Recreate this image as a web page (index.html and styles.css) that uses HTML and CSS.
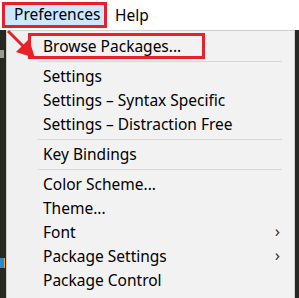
FILE: index.html
```html
<!DOCTYPE html>
<html lang="en">
<head>
  <meta charset="UTF-8">
  <title>Preferences menu</title>
  <link rel="stylesheet" href="styles.css">
</head>
<body>

  <div class="menubar">
    <span class="top-item top-active">Preferences</span>
    <span class="top-item">Help</span>
  </div>

  <div class="stage">
    <div class="editor-edge">
      <div class="bit bit-a"></div>
      <div class="bit bit-1"></div>
    </div>

    <div class="menu">
      <div class="item item-marked">Browse Packages...</div>
      <div class="sep"></div>
      <div class="item">Settings</div>
      <div class="item">Settings – Syntax Specific</div>
      <div class="item">Settings – Distraction Free</div>
      <div class="sep"></div>
      <div class="item">Key Bindings</div>
      <div class="sep"></div>
      <div class="item">Color Scheme...</div>
      <div class="item">Theme...</div>
      <div class="item has-sub">Font</div>
      <div class="item has-sub">Package Settings</div>
      <div class="item">Package Control</div>
    </div>
  </div>

  <!-- red annotation arrow -->
  <svg class="arrow" width="32" height="32" viewBox="0 0 32 32">
    <line x1="2" y1="2" x2="18" y2="18" stroke="#e8202a" stroke-width="3"/>
    <polygon points="29,29 10,23 23,10" fill="#e8202a"/>
  </svg>

</body>
</html>
```

FILE: styles.css
```css
body {
  margin: 0;
  background: #272822;
  font-family: 'Noto Sans', 'Open Sans', sans-serif;
  font-size: 15.5px;
  color: #000;
  width: 299px;
  height: 298px;
  overflow: hidden;
  position: relative;
}

.menubar {
  background: #fff;
  height: 30px;
  display: flex;
  align-items: flex-end;
  padding-left: 2px;
}

.top-item {
  height: 26px;
  line-height: 22px;
  padding: 0 8px;
  box-sizing: border-box;
}

.top-active {
  background: #cce8ff;
  border: 3px solid #e8202a;
  padding: 0 8px 0 9px;
  line-height: 18px;
  width: 105px;
  margin-bottom: 2px;
}

.stage {
  display: flex;
  height: 268px;
}

.editor-edge {
  width: 6px;
  position: relative;
}

.bit {
  position: absolute;
  left: 0;
  width: 4px;
}

.bit-a { top: 20px; height: 8px; background: #9a9a94; }
.bit-1 { top: 228px; height: 10px; background: #2a8ad0; border-right: 1px solid #f0a020; }

.menu {
  width: 287px;
  height: 264px;
  background: linear-gradient(to right, #f0f0f0 33px, #f2f2f2 33px);
  border: 1px solid #cfcfcf;
  padding-top: 3px;
  box-sizing: content-box;
}

.item {
  height: 24px;
  line-height: 24px;
  padding-left: 36px;
  position: relative;
  white-space: nowrap;
}

.item-marked::before {
  content: '';
  position: absolute;
  left: 21px;
  top: -1px;
  width: 171px;
  height: 20px;
  border: 3px solid #e8202a;
}

.has-sub::after {
  content: '›';
  position: absolute;
  right: 14px;
  top: -1px;
  font-size: 17px;
  color: #333;
}

.sep {
  height: 1px;
  background: #d7d7d7;
  margin: 3px 12px 2px 31px;
}

.arrow {
  position: absolute;
  left: 6px;
  top: 29px;
}
```
